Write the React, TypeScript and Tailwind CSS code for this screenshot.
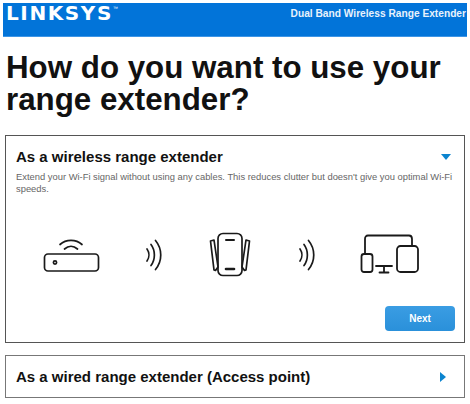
import React from 'react';

function RouterIcon() {
  return (
    <svg width="58" height="36" viewBox="0 0 58 36" fill="none" stroke="#1a1a1a" strokeWidth="1.7" strokeLinecap="round">
      <rect x="1.5" y="17" width="54" height="17" rx="3.5" />
      <circle cx="12" cy="25.5" r="1.6" />
      <path d="M17 7.5C23 2 33 2 39 7.5" />
      <path d="M21.5 12C25.5 8.5 30.5 8.5 34.5 12" />
    </svg>
  );
}

function SignalIcon() {
  return (
    <svg width="18" height="32" viewBox="0 0 18 32" fill="none" stroke="#1a1a1a" strokeWidth="1.7" strokeLinecap="round">
      <path d="M2 10C4.5 13.5 4.5 18.5 2 22" />
      <path d="M6 5.5C10.5 11.5 10.5 20.5 6 26.5" />
      <path d="M10.5 1.5C17.5 10 17.5 22 10.5 30.5" />
    </svg>
  );
}

function ExtenderIcon() {
  return (
    <svg width="42" height="46" viewBox="0 0 42 46" fill="none" stroke="#1a1a1a" strokeWidth="1.7" strokeLinecap="round" strokeLinejoin="round">
      <rect x="9" y="1.5" width="24" height="42" rx="5" />
      <path d="M17 8H25" strokeWidth="2" />
      <path d="M17 37H25" strokeWidth="2.6" />
      <path d="M1.5 9L5 8L9 35L6.5 38.5L5 38Z" />
      <path d="M40.5 9L37 8L33 35L35.5 38.5L37 38Z" />
    </svg>
  );
}

function DevicesIcon() {
  return (
    <svg width="60" height="42" viewBox="0 0 60 42" fill="none" stroke="#1a1a1a" strokeWidth="1.8" strokeLinecap="round" strokeLinejoin="round">
      <path d="M5 20V5C5 3 6 1.5 8 1.5H49C51 1.5 52 3 52 5V11" />
      <rect x="1.5" y="20" width="11" height="18" rx="2.5" />
      <rect x="37" y="12" width="21" height="26" rx="3.5" />
      <path d="M16 32H32M24 32V38.5M19.5 38.5H28.5" />
    </svg>
  );
}

export default function App() {
  return (
    <div className="h-[404px] w-[470px] overflow-hidden bg-white pt-[3px] font-['Liberation_Sans',Arial,sans-serif]">
      <header className="mx-[3px] flex h-[34px] items-start justify-between border-b border-[#3d95e6] bg-[#0274d9] pl-[3px] pr-[1px]">
        <div className="flex items-start text-white">
          <span className="font-['DejaVu_Sans',sans-serif] text-[20px] leading-[21px] font-bold tracking-[1.6px]">LINKSYS</span>
          <span className="mt-[2px] text-[5px] leading-[6px]">™</span>
        </div>
        <div className="pt-[5px] text-[10.2px] leading-[12px] font-bold text-[#e8f2fc]">Dual Band Wireless Range Extender</div>
      </header>

      <h1 className="mt-[15px] ml-[6px] text-[31.3px] leading-[32px] font-bold text-[#111111]">
        How do you want to use your<br />range extender?
      </h1>

      <section className="mt-[19px] mx-[5px] h-[208px] border border-[#555555] pl-[10px] pr-[8px] pt-[11px]">
        <div className="flex items-center justify-between pr-[2px]">
          <h2 className="text-[15px] leading-[20px] font-bold text-[#111111]">As a wireless range extender</h2>
          <div className="mr-[3px] h-0 w-0 border-x-[5px] border-t-[6px] border-x-transparent border-t-[#0b84cf]" />
        </div>
        <p className="mt-[4px] text-[9.4px] leading-[12px] text-[#666666]">
          Extend your Wi-Fi signal without using any cables. This reduces clutter but doesn't give you optimal Wi-Fi speeds.
        </p>
        <div className="mt-[37px] flex items-center pl-[27px]">
          <RouterIcon />
          <div className="ml-[44px]"><SignalIcon /></div>
          <div className="ml-[46px]"><ExtenderIcon /></div>
          <div className="ml-[47px]"><SignalIcon /></div>
          <div className="ml-[44px]"><DevicesIcon /></div>
        </div>
        <div className="mt-[28px] flex justify-end pr-[1px]">
          <button className="h-[25px] w-[70px] rounded-[4px] bg-gradient-to-b from-[#3a9de3] to-[#2a90da] text-[10px] font-bold text-white">Next</button>
        </div>
      </section>

      <section className="mt-[12px] mx-[5px] flex h-[43px] items-center justify-between border border-[#777777] pl-[10px] pr-[18px]">
        <h2 className="text-[15px] leading-[20px] font-bold text-[#111111]">As a wired range extender (Access point)</h2>
        <div className="h-0 w-0 border-y-[5px] border-l-[6px] border-y-transparent border-l-[#0b84cf]" />
      </section>
    </div>
  );
}
